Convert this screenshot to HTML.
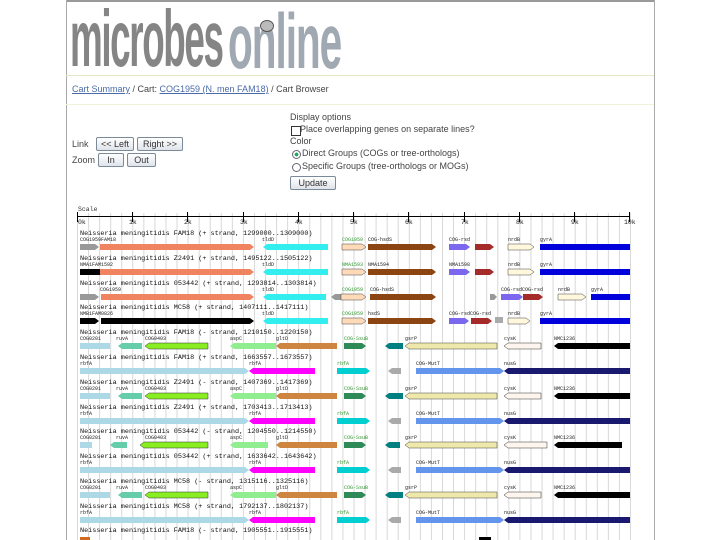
<!DOCTYPE html>
<html><head><meta charset="utf-8"><style>
body{margin:0;width:720px;height:540px;background:#fff;overflow:hidden;position:relative;font-family:"Liberation Sans",sans-serif;}
.a{position:absolute}
.btn{position:absolute;border:1px solid #7a8a99;border-radius:2px;background:linear-gradient(#fff,#dfe3ea);font-size:9px;color:#333;text-align:center;line-height:12px;height:12px}
.t{font-size:9px;color:#444;position:absolute;white-space:nowrap}
a{color:#4a6aa8;text-decoration:underline}
</style></head><body>
<div class="a" style="left:66px;top:0;width:588px;height:2px;background:#999"></div>
<div class="a" style="left:66px;top:0;width:1px;height:540px;background:#aaa"></div>
<div class="a" style="left:654px;top:0;width:1px;height:540px;background:#aaa"></div>
<div class="a" style="left:70px;top:-6px;font-size:80px;font-weight:bold;color:#858585;transform:scaleX(0.46);transform-origin:0 0;letter-spacing:-3px;line-height:90px">microbes</div>
<div class="a" style="left:228px;top:-4px;font-size:78px;font-weight:bold;color:#a0a8b2;transform:scaleX(0.52);transform-origin:0 0;letter-spacing:-2px;line-height:90px">online</div>
<div class="a" style="left:260px;top:20px;width:12px;height:10px;border-radius:50%;background:#bbb;border:1px solid #555"></div>
<div class="a" style="left:66px;top:75px;width:588px;height:1px;background:#e6e6c8"></div>
<div class="t" style="left:72px;top:84px"><a>Cart Summary</a> / Cart: <a>COG1959 (N. men FAM18)</a> / Cart Browser</div>
<div class="a" style="left:66px;top:104px;width:588px;height:1px;background:#f2f2dc"></div>
<div class="t" style="left:72px;top:139px">Link</div>
<div class="btn" style="left:96px;top:137px;width:36px">&lt;&lt; Left</div>
<div class="btn" style="left:137px;top:137px;width:44px">Right &gt;&gt;</div>
<div class="t" style="left:72px;top:155px">Zoom</div>
<div class="btn" style="left:98px;top:153px;width:24px">In</div>
<div class="btn" style="left:127px;top:153px;width:27px">Out</div>
<div class="t" style="left:290px;top:112px">Display options</div>
<div class="a" style="left:291px;top:126px;width:8px;height:8px;border:1px solid #333;background:#fff"></div>
<div class="t" style="left:300px;top:124px">Place overlapping genes on separate lines?</div>
<div class="t" style="left:290px;top:136px">Color</div>
<div class="a" style="left:292px;top:150px;width:7px;height:7px;border:1px solid #667;border-radius:50%;background:radial-gradient(#2a5 35%,#fff 40%)"></div>
<div class="t" style="left:302px;top:148px">Direct Groups (COGs or tree-orthologs)</div>
<div class="a" style="left:292px;top:163px;width:7px;height:7px;border:1px solid #667;border-radius:50%;background:#fff"></div>
<div class="t" style="left:302px;top:161px">Specific Groups (tree-orthologs or MOGs)</div>
<div class="btn" style="left:290px;top:176px;width:44px">Update</div>
<svg class="a" style="left:0;top:0" width="720" height="540">
<defs>
<pattern id="grid" x="77" y="0" width="11.06" height="10" patternUnits="userSpaceOnUse"><rect x="0" y="0" width="1" height="10" fill="#d8d8d8"/></pattern>
</defs>
<rect x="77" y="213" width="554" height="327" fill="url(#grid)"/>
<text x="78" y="211" font-family="Liberation Mono" font-size="6.5" fill="#333">Scale</text>
<line x1="77" y1="216.5" x2="630" y2="216.5" stroke="#000" stroke-width="1"/>
<g stroke="#000" stroke-width="1">
<line x1="77.5" y1="212" x2="77.5" y2="222"/><line x1="132.5" y1="212" x2="132.5" y2="222"/><line x1="187.5" y1="212" x2="187.5" y2="222"/><line x1="243.5" y1="212" x2="243.5" y2="222"/><line x1="298.5" y1="212" x2="298.5" y2="222"/><line x1="353.5" y1="212" x2="353.5" y2="222"/><line x1="408.5" y1="212" x2="408.5" y2="222"/><line x1="464.5" y1="212" x2="464.5" y2="222"/><line x1="519.5" y1="212" x2="519.5" y2="222"/><line x1="574.5" y1="212" x2="574.5" y2="222"/><line x1="629.5" y1="212" x2="629.5" y2="222"/>
</g>
<g font-family="Liberation Mono" font-size="6.5" fill="#222">
<text x="78" y="224">0k</text><text x="129" y="224">1k</text><text x="184" y="224">2k</text><text x="240" y="224">3k</text><text x="295" y="224">4k</text><text x="350" y="224">5k</text><text x="405" y="224">6k</text><text x="461" y="224">7k</text><text x="516" y="224">8k</text><text x="571" y="224">9k</text><text x="624" y="224">10k</text>
</g>
<defs>
<g id="A">
<polygon points="100,11 250,11 254,14 250,17 100,17" fill="#f08460"/>
<polygon points="263,14 267,11 328,11 328,17 267,17" fill="#33eeee"/>
<polygon points="342,11 362,11 366,14 362,17 342,17" fill="#ffdab9" stroke="#444" stroke-width=".5"/>
<polygon points="368,11 432,11 436,14 432,17 368,17" fill="#8b4513"/>
<polygon points="449,11 466,11 470,14 466,17 449,17" fill="#7b68ee"/>
<polygon points="475,11 490,11 494,14 490,17 475,17" fill="#a52a2a"/>
<polygon points="508,11 530,11 534,14 530,17 508,17" fill="#fff8dc" stroke="#444" stroke-width=".5"/>
<rect x="540" y="11" width="90" height="6" fill="#0000dd"/>
</g>
<g id="B">
<rect x="80" y="11" width="30" height="6" fill="#add8e6"/>
<polygon points="118,14 122,11 142,11 142,17 122,17" fill="#66cdaa"/>
<polygon points="145,14 149,11 208,11 208,17 149,17" fill="#88ee22" stroke="#333" stroke-width=".5"/>
<polygon points="230,14 234,11 276,11 276,17 234,17" fill="#90ee90"/>
<polygon points="276,14 280,11 337,11 337,17 280,17" fill="#cd853f"/>
<polygon points="344,11 362,11 366,14 362,17 344,17" fill="#2e8b57"/>
<polygon points="385,14 389,11 403,11 403,17 389,17" fill="#008080"/>
<polygon points="405,14 409,11 497,11 497,17 409,17" fill="#eee8aa" stroke="#444" stroke-width=".5"/>
<polygon points="504,14 508,11 541,11 541,17 508,17" fill="#fdf5ee" stroke="#333" stroke-width=".5"/>
<polygon points="554,14 558,11 630,11 630,17 558,17" fill="#000"/>
</g>
<g id="C">
<polygon points="80,11 245,11 249,14 245,17 80,17" fill="#add8e6"/>
<polygon points="249,14 253,11 315,11 315,17 253,17" fill="#ff00ff"/>
<polygon points="337,11 366,11 370,14 366,17 337,17" fill="#00ced1"/>
<polygon points="388,14 392,11 401,11 401,17 392,17" fill="#aaa"/>
<polygon points="416,11 500,11 504,14 500,17 416,17" fill="#6495ed"/>
<polygon points="504,14 508,11 630,11 630,17 508,17" fill="#191970"/>
</g>
<g id="Bl" font-family="Liberation Mono" font-size="5" fill="#222">
<text x="80" y="8">COG0201</text><text x="116" y="8">ruvA</text><text x="145" y="8">COG0403</text><text x="230" y="8">aspC</text><text x="276" y="8">gltD</text><text x="344" y="8" fill="#393">COG-SsuB</text><text x="405" y="8">gsrP</text><text x="504" y="8">cysK</text><text x="554" y="8">NMC1236</text>
</g>
<g id="Cl" font-family="Liberation Mono" font-size="5" fill="#222">
<text x="80" y="8">rbfA</text><text x="249" y="8">rbfA</text><text x="337" y="8" fill="#393">rbfA</text><text x="416" y="8">COG-MutT</text><text x="504" y="8">nusG</text>
</g>
</defs>
<g font-family="Liberation Mono" font-size="6.8" fill="#111">
<text x="80" y="235">Neisseria meningitidis FAM18 (+ strand, 1299000..1309000)</text>
<text x="80" y="260">Neisseria meningitidis Z2491 (+ strand, 1495122..1505122)</text>
<text x="80" y="285">Neisseria meningitidis 053442 (+ strand, 1293814..1303814)</text>
<text x="80" y="309">Neisseria meningitidis MC58 (+ strand, 1407111..1417111)</text>
<text x="80" y="334">Neisseria meningitidis FAM18 (- strand, 1210150..1220150)</text>
<text x="80" y="359">Neisseria meningitidis FAM18 (+ strand, 1663557..1673557)</text>
<text x="80" y="384">Neisseria meningitidis Z2491 (- strand, 1407369..1417369)</text>
<text x="80" y="409">Neisseria meningitidis Z2491 (+ strand, 1703413..1713413)</text>
<text x="80" y="433">Neisseria meningitidis 053442 (- strand, 1204550..1214550)</text>
<text x="80" y="458">Neisseria meningitidis 053442 (+ strand, 1633642..1643642)</text>
<text x="80" y="483">Neisseria meningitidis MC58 (- strand, 1315116..1325116)</text>
<text x="80" y="508">Neisseria meningitidis MC58 (+ strand, 1792137..1802137)</text>
<text x="80" y="532">Neisseria meningitidis FAM18 (- strand, 1905551..1915551)</text>
</g>
<g transform="translate(0,233)"><polygon points="80,11 95,11 99,14 95,17 80,17" fill="#999"/><use href="#A"/></g>
<g transform="translate(0,258)"><rect x="80" y="11" width="20" height="6" fill="#000"/><use href="#A"/></g>
<g transform="translate(0,283)">
<polygon points="80,11 95,11 99,14 95,17 80,17" fill="#999"/>
<polygon points="101,11 250,11 254,14 250,17 101,17" fill="#f08460"/>
<polygon points="263,14 267,11 326,11 326,17 267,17" fill="#33eeee"/>
<polygon points="331,14 335,11 341,11 341,17 335,17" fill="#999"/>
<polygon points="341,11 362,11 366,14 362,17 341,17" fill="#ffdab9" stroke="#444" stroke-width=".5"/>
<polygon points="370,11 432,11 436,14 432,17 370,17" fill="#8b4513"/>
<polygon points="490,11 494,11 497,14 494,17 490,17" fill="#999"/>
<polygon points="501,11 519,11 523,14 519,17 501,17" fill="#7b68ee"/>
<polygon points="523,11 539,11 543,14 539,17 523,17" fill="#a52a2a"/>
<polygon points="558,11 582,11 586,14 582,17 558,17" fill="#fff8dc" stroke="#444" stroke-width=".5"/>
<rect x="591" y="11" width="39" height="6" fill="#0000dd"/>
</g>
<g transform="translate(0,307)">
<polygon points="80,11 95,11 99,14 95,17 80,17" fill="#000"/>
<polygon points="101,11 250,11 254,14 250,17 101,17" fill="#000"/>
<polygon points="263,14 267,11 328,11 328,17 267,17" fill="#33eeee"/>
<polygon points="342,11 362,11 366,14 362,17 342,17" fill="#ffdab9" stroke="#444" stroke-width=".5"/>
<polygon points="368,11 432,11 436,14 432,17 368,17" fill="#8b4513"/>
<polygon points="449,11 465,11 469,14 465,17 449,17" fill="#7b68ee"/>
<polygon points="471,11 488,11 492,14 488,17 471,17" fill="#a52a2a"/>
<rect x="495" y="10" width="8" height="6" fill="#aaa"/>
<polygon points="508,11 526,11 530,14 526,17 508,17" fill="#fff8dc" stroke="#444" stroke-width=".5"/>
<rect x="540" y="11" width="90" height="6" fill="#0000dd"/>
</g>
<g transform="translate(0,332)"><use href="#B"/></g>
<g transform="translate(0,357)"><use href="#C"/><use href="#Cl"/></g>
<g transform="translate(0,382)"><use href="#B"/><use href="#Bl"/></g>
<g transform="translate(0,407)"><use href="#C"/><use href="#Cl"/></g>
<g transform="translate(0,431)">
<rect x="80" y="11" width="12" height="6" fill="#add8e6"/>
<polygon points="110,14 114,11 127,11 127,17 114,17" fill="#66cdaa"/>
<polygon points="140,14 144,11 208,11 208,17 144,17" fill="#88ee22" stroke="#333" stroke-width=".5"/>
<polygon points="230,14 234,11 268,11 268,17 234,17" fill="#90ee90"/>
<polygon points="276,14 280,11 337,11 337,17 280,17" fill="#cd853f"/>
<polygon points="344,11 362,11 366,14 362,17 344,17" fill="#2e8b57"/>
<polygon points="385,14 389,11 400,11 400,17 389,17" fill="#008080"/>
<polygon points="405,14 409,11 497,11 497,17 409,17" fill="#eee8aa" stroke="#444" stroke-width=".5"/>
<polygon points="504,14 508,11 547,11 547,17 508,17" fill="#fdf5ee" stroke="#333" stroke-width=".5"/>
<polygon points="554,14 558,11 622,11 622,17 558,17" fill="#000"/>
<use href="#Bl"/>
</g>
<g transform="translate(0,456)"><use href="#C"/><use href="#Cl"/></g>
<g transform="translate(0,481)"><use href="#B"/><use href="#Bl"/></g>
<g transform="translate(0,506)"><use href="#C"/><use href="#Cl"/></g>
<g transform="translate(0,530)">
<rect x="80" y="7" width="10" height="6" fill="#d2691e"/>
<rect x="479" y="7" width="12" height="6" fill="#000"/>
</g>
<g font-family="Liberation Mono" font-size="5" fill="#222">
<text x="80" y="241">COG1959FAM18</text><text x="262" y="241">tldD</text><text x="342" y="241" fill="#393">COG1959</text><text x="368" y="241">COG-hsdS</text><text x="449" y="241">COG-rsd</text><text x="508" y="241">nrdB</text><text x="540" y="241">gyrA</text>
<text x="80" y="266">NMA1FAM1592</text><text x="262" y="266">tldD</text><text x="342" y="266" fill="#393">NMA1593</text><text x="368" y="266">NMA1594</text><text x="449" y="266">NMA1598</text><text x="508" y="266">nrdB</text><text x="540" y="266">gyrA</text>
<text x="100" y="291">COG1959</text><text x="262" y="291">tldD</text><text x="342" y="291" fill="#393">COG1959</text><text x="370" y="291">COG-hsdS</text><text x="501" y="291">COG-rsdCOG-rsd</text><text x="558" y="291">nrdB</text><text x="591" y="291">gyrA</text>
<text x="80" y="315">NMB1FAM0826</text><text x="262" y="315">tldD</text><text x="342" y="315" fill="#393">COG1959</text><text x="368" y="315">hsdS</text><text x="449" y="315">COG-rsdCOG-rsd</text><text x="508" y="315">nrdB</text><text x="540" y="315">gyrA</text>
<text x="80" y="340">COG0201</text><text x="116" y="340">ruvA</text><text x="145" y="340">COG0403</text><text x="230" y="340">aspC</text><text x="276" y="340">gltD</text><text x="344" y="340" fill="#393">COG-SsuB</text><text x="405" y="340">gsrP</text><text x="504" y="340">cysK</text><text x="554" y="340">NMC1236</text>
</g>
</svg>
</body></html>
